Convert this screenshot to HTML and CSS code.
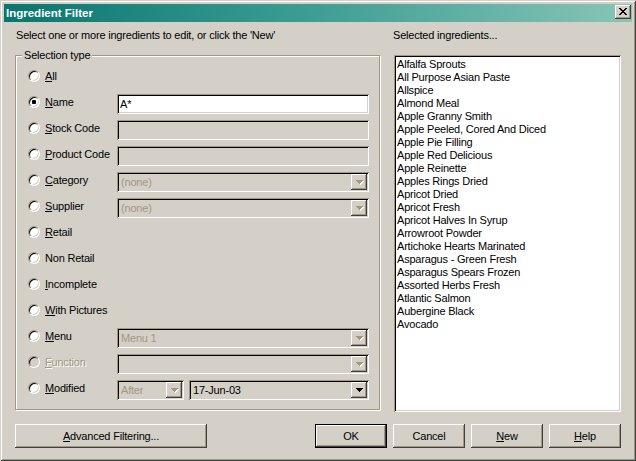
FILE: index.html
```html
<!DOCTYPE html>
<html>
<head>
<meta charset="utf-8">
<link rel="stylesheet" href="styles.css">
</head>
<body>
<div class="window">
  <div class="titlebar">
    <span class="title">Ingredient Filter</span>
    <span class="close"><svg width="8" height="7" viewBox="0 0 8 7" shape-rendering="crispEdges"><rect x="0" y="0" width="2" height="1"/><rect x="6" y="0" width="2" height="1"/><rect x="1" y="1" width="2" height="1"/><rect x="5" y="1" width="2" height="1"/><rect x="2" y="2" width="4" height="1"/><rect x="3" y="3" width="2" height="1"/><rect x="2" y="4" width="4" height="1"/><rect x="1" y="5" width="2" height="1"/><rect x="5" y="5" width="2" height="1"/><rect x="0" y="6" width="2" height="1"/><rect x="6" y="6" width="2" height="1"/></svg></span>
  </div>
  <div class="content">
    <div class="main">
      <div class="left">
        <p class="caption">Select one or more ingredients to edit, or click the 'New'</p>
        <fieldset class="group">
          <legend>Selection type</legend>
          <div class="row"><span class="radio"></span><span class="label"><u>A</u>ll</span></div>
          <div class="row"><span class="radio checked"></span><span class="label"><u>N</u>ame</span><div class="field edit white"><span class="val">A*</span></div></div>
          <div class="row"><span class="radio"></span><span class="label"><u>S</u>tock Code</span><div class="field edit"></div></div>
          <div class="row"><span class="radio"></span><span class="label"><u>P</u>roduct Code</span><div class="field edit"></div></div>
          <div class="row"><span class="radio"></span><span class="label"><u>C</u>ategory</span>
            <div class="field combo disabled"><span class="val">(none)</span><span class="dd"><svg width="8" height="5" viewBox="0 0 8 5" shape-rendering="crispEdges"><path class="hl" transform="translate(1 1)" d="M0 0h7v1h-1v1h-1v1h-1v1h-1v-1h-1v-1h-1v-1h-1z"/><path class="ar" d="M0 0h7v1h-1v1h-1v1h-1v1h-1v-1h-1v-1h-1v-1h-1z"/></svg></span></div></div>
          <div class="row"><span class="radio"></span><span class="label"><u>S</u>upplier</span>
            <div class="field combo disabled"><span class="val">(none)</span><span class="dd"><svg width="8" height="5" viewBox="0 0 8 5" shape-rendering="crispEdges"><path class="hl" transform="translate(1 1)" d="M0 0h7v1h-1v1h-1v1h-1v1h-1v-1h-1v-1h-1v-1h-1z"/><path class="ar" d="M0 0h7v1h-1v1h-1v1h-1v1h-1v-1h-1v-1h-1v-1h-1z"/></svg></span></div></div>
          <div class="row"><span class="radio"></span><span class="label"><u>R</u>etail</span></div>
          <div class="row"><span class="radio"></span><span class="label">Non Retail</span></div>
          <div class="row"><span class="radio"></span><span class="label"><u>I</u>ncomplete</span></div>
          <div class="row"><span class="radio"></span><span class="label"><u>W</u>ith Pictures</span></div>
          <div class="row"><span class="radio"></span><span class="label"><u>M</u>enu</span>
            <div class="field combo disabled"><span class="val">Menu 1</span><span class="dd"><svg width="8" height="5" viewBox="0 0 8 5" shape-rendering="crispEdges"><path class="hl" transform="translate(1 1)" d="M0 0h7v1h-1v1h-1v1h-1v1h-1v-1h-1v-1h-1v-1h-1z"/><path class="ar" d="M0 0h7v1h-1v1h-1v1h-1v1h-1v-1h-1v-1h-1v-1h-1z"/></svg></span></div></div>
          <div class="row"><span class="radio off"></span><span class="label dim"><u>F</u>unction</span>
            <div class="field combo disabled"><span class="val"></span><span class="dd"><svg width="8" height="5" viewBox="0 0 8 5" shape-rendering="crispEdges"><path class="hl" transform="translate(1 1)" d="M0 0h7v1h-1v1h-1v1h-1v1h-1v-1h-1v-1h-1v-1h-1z"/><path class="ar" d="M0 0h7v1h-1v1h-1v1h-1v1h-1v-1h-1v-1h-1v-1h-1z"/></svg></span></div></div>
          <div class="row"><span class="radio"></span><span class="label"><u>M</u>odified</span>
            <div class="field combo disabled after"><span class="val">After</span><span class="dd"><svg width="8" height="5" viewBox="0 0 8 5" shape-rendering="crispEdges"><path class="hl" transform="translate(1 1)" d="M0 0h7v1h-1v1h-1v1h-1v1h-1v-1h-1v-1h-1v-1h-1z"/><path class="ar" d="M0 0h7v1h-1v1h-1v1h-1v1h-1v-1h-1v-1h-1v-1h-1z"/></svg></span></div>
            <div class="field combo"><span class="val">17-Jun-03</span><span class="dd"><svg width="8" height="5" viewBox="0 0 8 5" shape-rendering="crispEdges"><path class="ar" d="M0 0h7v1h-1v1h-1v1h-1v1h-1v-1h-1v-1h-1v-1h-1z"/></svg></span></div></div>
        </fieldset>
      </div>
      <div class="right">
        <p class="caption">Selected ingredients...</p>
        <ul class="list">
          <li>Alfalfa Sprouts</li>
          <li>All Purpose Asian Paste</li>
          <li>Allspice</li>
          <li>Almond Meal</li>
          <li>Apple Granny Smith</li>
          <li>Apple Peeled, Cored And Diced</li>
          <li>Apple Pie Filling</li>
          <li>Apple Red Delicious</li>
          <li>Apple Reinette</li>
          <li>Apples Rings Dried</li>
          <li>Apricot Dried</li>
          <li>Apricot Fresh</li>
          <li>Apricot Halves In Syrup</li>
          <li>Arrowroot Powder</li>
          <li>Artichoke Hearts Marinated</li>
          <li>Asparagus - Green Fresh</li>
          <li>Asparagus Spears Frozen</li>
          <li>Assorted Herbs Fresh</li>
          <li>Atlantic Salmon</li>
          <li>Aubergine Black</li>
          <li>Avocado</li>
        </ul>
      </div>
    </div>
    <div class="buttons">
      <span class="btn adv"><u>A</u>dvanced Filtering...</span>
      <div class="btngroup">
        <span class="btn default">OK</span>
        <span class="btn">Cancel</span>
        <span class="btn"><u>N</u>ew</span>
        <span class="btn"><u>H</u>elp</span>
      </div>
    </div>
  </div>
</div>
</body>
</html>
```

FILE: styles.css
```css
* { box-sizing: border-box; }
html, body { margin: 0; padding: 0; }
body {
  width: 636px;
  height: 461px;
  overflow: hidden;
  background: #d4d0c8;
  color: #000;
  font: 11px "Liberation Sans", Arial, sans-serif;
  letter-spacing: -0.2px;
  --face: #d4d0c8;
  --shadow: #a39780;
  --dark: #000;
}
.window {
  width: 636px;
  height: 461px;
  padding: 4px;
  background: var(--face);
  box-shadow: inset 1px 1px 0 var(--face), inset -1px -1px 0 #404040,
              inset 2px 2px 0 #fff, inset -2px -2px 0 var(--shadow);
  display: flex;
  flex-direction: column;
}
.titlebar {
  height: 18px;
  flex: none;
  display: flex;
  align-items: flex-start;
  background: linear-gradient(90deg, #08766f 0%, #3f9e94 50%, #88c5b6 100%);
  color: #fff;
}
.title {
  flex: 1;
  font-weight: bold;
  font-size: 11.5px;
  letter-spacing: 0;
  line-height: 18px;
  padding-left: 2px;
}
.close {
  width: 16px;
  height: 14px;
  margin: 1px 1px 0 0;
  background: var(--face);
  box-shadow: inset -1px -1px 0 #404040, inset 1px 1px 0 #fff,
              inset -2px -2px 0 var(--shadow);
  display: flex;
  align-items: center;
  justify-content: center;
  padding: 0 1px 1px 0;
}
.close svg { fill: #000; display: block; }

.content {
  flex: 1;
  padding: 0 11px 0 11px;
}
.main {
  display: flex;
  gap: 12px;
  height: 390px;
}
.left { width: 366px; flex: none; }
.right { width: 228px; flex: none; }
.caption {
  margin: 7px 0 0 1px;
  line-height: 13px;
  height: 13px;
  white-space: nowrap;
}
.right .caption { margin-left: 0; }

.group {
  margin: 7px 0 0 0;
  width: 365px;
  min-width: 0;
  padding: 1px 10px 8px 12px;
  border: 1px solid var(--shadow);
  box-shadow: inset 1px 1px 0 #fff, 1px 1px 0 #fff;
}
.group legend {
  padding: 0 2px;
  margin-left: -6px;
  line-height: 13px;
  background: var(--face);
}
.row {
  display: flex;
  align-items: flex-start;
  height: 26px;
}
.radio {
  flex: none;
  position: relative;
  width: 12px;
  height: 12px;
  margin: 7px 5px 0 0;
  border-radius: 50%;
  border: 1px solid;
  border-color: var(--shadow) #fff #fff var(--shadow);
  background: #fff;
  box-shadow: inset 1px 1px 0 var(--dark), inset -1px -1px 0 var(--face);
}
.radio.off { background: var(--face); }
.radio.checked::after {
  content: "";
  position: absolute;
  left: 3px;
  top: 3px;
  width: 4px;
  height: 4px;
  border-radius: 1px;
  background: #000;
}
.label {
  flex: none;
  width: 72px;
  margin-top: 7px;
  line-height: 13px;
  white-space: nowrap;
}
.label.dim { color: var(--shadow); text-shadow: 1px 1px 0 #fff; }

.field {
  flex: 1;
  min-width: 0;
  height: 20px;
  margin-top: 5px;
  padding: 2px;
  background: var(--face);
  box-shadow: inset 1px 1px 0 var(--shadow), inset -1px -1px 0 #fff,
              inset 2px 2px 0 var(--dark), inset -2px -2px 0 var(--face);
  display: flex;
  line-height: 16px;
  white-space: nowrap;
}
.field.white { background: #fff; }
.val { flex: 1; padding-left: 1px; overflow: hidden; }
.combo .val { padding-left: 2px; }
.disabled .val { color: var(--shadow); }
.field.after { flex: none; width: 67px; margin-right: 5px; }
.dd {
  flex: none;
  width: 16px;
  height: 16px;
  background: var(--face);
  box-shadow: inset -1px -1px 0 #404040, inset 1px 1px 0 #fff,
              inset -2px -2px 0 var(--shadow);
  display: flex;
  align-items: center;
  justify-content: center;
  padding: 1px 0 0 1px;
}
.dd svg { display: block; }
.dd .ar { fill: #000; }
.disabled .dd .ar { fill: var(--shadow); }
.dd .hl { fill: #fff; }

.list {
  list-style: none;
  margin: 13px 0 0 1px;
  height: 357px;
  padding: 3px;
  background: #fff;
  box-shadow: inset 1px 1px 0 var(--shadow), inset -1px -1px 0 #fff,
              inset 2px 2px 0 var(--dark), inset -2px -2px 0 var(--face);
  line-height: 13px;
  white-space: nowrap;
  overflow: hidden;
}
.list li { height: 13px; }

.buttons {
  display: flex;
  justify-content: space-between;
  margin-top: 12px;
}
.btngroup { display: flex; gap: 6px; }
.btn {
  display: flex;
  align-items: center;
  justify-content: center;
  width: 72px;
  height: 24px;
  background: var(--face);
  box-shadow: inset -1px -1px 0 #404040, inset 1px 1px 0 #fff,
              inset -2px -2px 0 var(--shadow);
  padding-bottom: 1px;
  white-space: nowrap;
}
.btn.adv { width: 192px; }
.btn.default { border: 1px solid #000; }
```
